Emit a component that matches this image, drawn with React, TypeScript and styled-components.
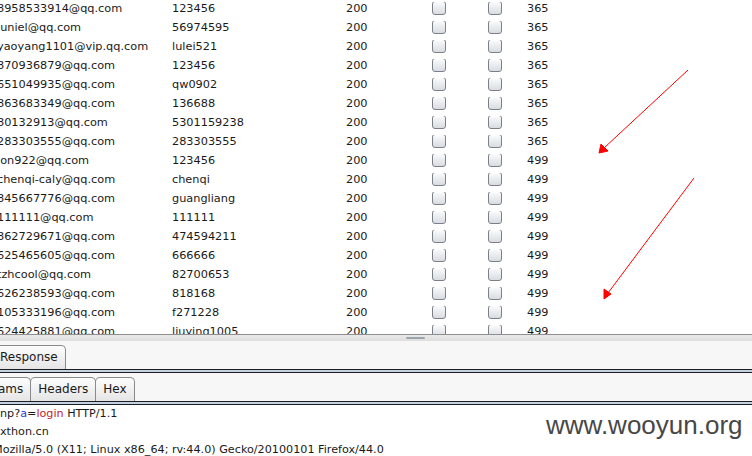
import styled, { createGlobalStyle } from "styled-components";

const GlobalStyle = createGlobalStyle`
    html, body {
        margin: 0;
        padding: 0;
        background: #ffffff;
        overflow: hidden;
    }
`;

const Window = styled.div`
    position: relative;
    width: 752px;
    height: 456px;
    overflow: hidden;
    font-family: "DejaVu Sans", sans-serif;
    color: #1a1a1a;
    background: #ffffff;
`;

const ResultsTable = styled.div`
    height: 334px;
    overflow: hidden;
    border-bottom: 1px solid #8e8e8e;
    background: #ffffff;
`;

const Rows = styled.div`
    margin-top: -1px;
    margin-left: -3px;
`;

const Row = styled.div`
    display: grid;
    grid-template-columns: 175px 174px 86px 56px 39px 1fr;
    align-items: center;
    height: 19px;
    font-size: 11.3px;
    white-space: nowrap;
`;

const Cell = styled.span`
    overflow: hidden;
`;

const Checkbox = styled.span`
    display: block;
    width: 12px;
    height: 12px;
    border: 1px solid #7b7f87;
    border-radius: 3px;
    background: linear-gradient(to bottom, #fbfbfc, #d9dce2);
    box-shadow: inset 0 1px 0 #ffffff;
    margin-top: -1px;
`;

const Splitter = styled.div`
    height: 6px;
    background: linear-gradient(to bottom, #e9e9e9, #dedede);
    padding-left: 406px;
    display: flex;
    align-items: center;
`;

const Grip = styled.div`
    width: 19px;
    height: 2px;
    border-radius: 1px;
    background: #9ba3ad;
`;

const TabStrip = styled.div`
    height: 28px;
    background: #f7f7f7;
    display: flex;
    align-items: flex-end;
    overflow: hidden;
`;

const Tab = styled.div<{ $offset?: number }>`
    height: 23px;
    margin-left: ${(p) => (p.$offset ? `${p.$offset}px` : "-1px")};
    padding: 0 7px;
    border: 1px solid #8a8a8a;
    border-bottom: none;
    border-radius: 5px 5px 0 0;
    background: linear-gradient(to bottom, #fdfdfd, #e5e5e5);
    font-size: 12px;
    line-height: 23px;
    white-space: nowrap;
    color: #1a1a1a;
`;

const Band = styled.div`
    height: 2px;
    border-top: 1px solid #1e1e1e;
    border-bottom: 1px solid #1e1e1e;
    background: #c3d2e3;
`;

const RequestText = styled.div`
    background: #ffffff;
    font-size: 11.2px;
    line-height: 18px;
    white-space: nowrap;
    overflow: hidden;
`;

const Line = styled.div<{ $offset?: number }>`
    margin-left: ${(p) => p.$offset ?? 0}px;
`;

const ParamName = styled.span`
    color: #2b35d8;
`;

const ParamValue = styled.span`
    color: #c0262b;
`;

const Arrows = styled.svg`
    position: absolute;
    left: 0;
    top: 0;
    pointer-events: none;
`;

const Watermark = styled.div`
    position: absolute;
    left: 546px;
    top: 410px;
    font-family: "Liberation Sans", Arial, sans-serif;
    font-size: 26px;
    color: #474747;
    white-space: nowrap;
`;

const rows: [string, string, string][] = [
    ["8958533914@qq.com", "123456", "365"],
    ["juniel@qq.com", "56974595", "365"],
    ["yaoyang1101@vip.qq.com", "lulei521", "365"],
    ["870936879@qq.com", "123456", "365"],
    ["651049935@qq.com", "qw0902", "365"],
    ["863683349@qq.com", "136688", "365"],
    ["80132913@qq.com", "5301159238", "365"],
    ["283303555@qq.com", "283303555", "365"],
    ["lon922@qq.com", "123456", "499"],
    ["chenqi-caly@qq.com", "chenqi", "499"],
    ["845667776@qq.com", "guangliang", "499"],
    ["111111@qq.com", "111111", "499"],
    ["862729671@qq.com", "474594211", "499"],
    ["625465605@qq.com", "666666", "499"],
    ["tzhcool@qq.com", "82700653", "499"],
    ["626238593@qq.com", "818168", "499"],
    ["105333196@qq.com", "f271228", "499"],
    ["624425881@qq.com", "liuying1005", "499"],
];

export default function App() {
    return (
        <Window>
            <GlobalStyle />
            <ResultsTable>
                <Rows>
                    {rows.map(([email, pass, len], i) => (
                        <Row key={i}>
                            <Cell>{email}</Cell>
                            <Cell>{pass}</Cell>
                            <Cell>200</Cell>
                            <Cell><Checkbox /></Cell>
                            <Cell><Checkbox /></Cell>
                            <Cell>{len}</Cell>
                        </Row>
                    ))}
                </Rows>
            </ResultsTable>
            <Splitter>
                <Grip />
            </Splitter>
            <TabStrip>
                <Tab $offset={-8}>Response</Tab>
            </TabStrip>
            <Band />
            <TabStrip>
                <Tab $offset={-29}>Params</Tab>
                <Tab>Headers</Tab>
                <Tab>Hex</Tab>
            </TabStrip>
            <Band />
            <RequestText>
                <Line>
                    np?<ParamName>a</ParamName>=<ParamValue>login</ParamValue> HTTP/1.1
                </Line>
                <Line>xthon.cn</Line>
                <Line $offset={-7}>Mozilla/5.0 (X11; Linux x86_64; rv:44.0) Gecko/20100101 Firefox/44.0</Line>
            </RequestText>
            <Arrows width="752" height="456" viewBox="0 0 752 456">
                <g stroke="#ff0000" strokeWidth="1" fill="#ff0000">
                    <line x1="688" y1="70" x2="604" y2="148" />
                    <polygon points="599,153 601,144 608,151" />
                    <line x1="694" y1="178" x2="608" y2="293" />
                    <polygon points="604,299 604,289 611,294" />
                </g>
            </Arrows>
            <Watermark>www.wooyun.org</Watermark>
        </Window>
    );
}
